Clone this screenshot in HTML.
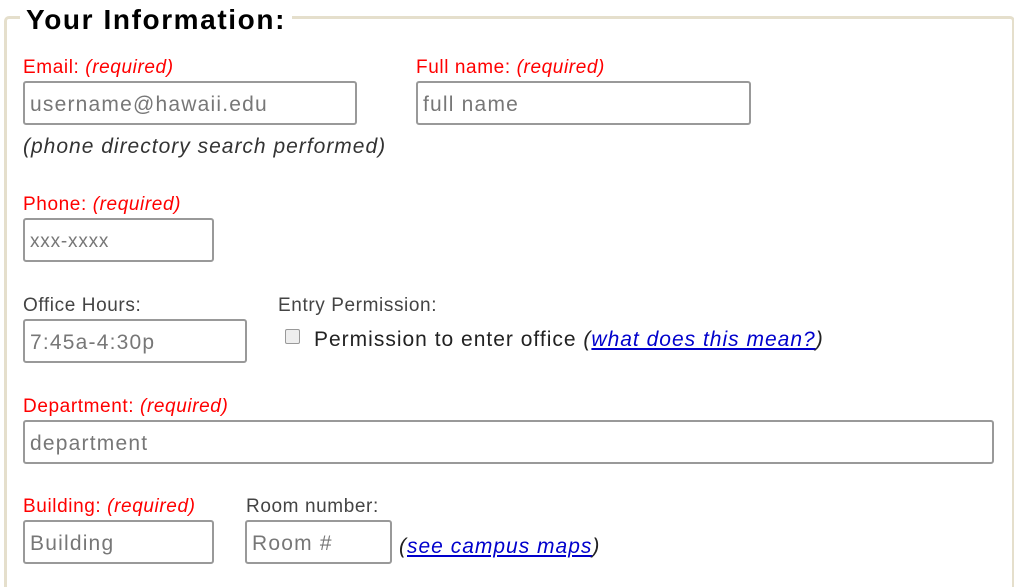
<!DOCTYPE html>
<html style="overflow:hidden;height:587px"><head><style>
body{margin:0;width:1014px;height:587px;background:#fff;font-family:"Liberation Sans",sans-serif;position:relative;overflow:hidden}
.fs{position:absolute;left:4px;top:16px;width:1005px;height:568px;border:3px solid #e5dfcc;border-bottom:none;border-radius:5px 5px 0 0}
.lg{position:absolute;left:20px;top:2px;background:#fff;padding:0 6px;font-weight:bold;font-size:28px;color:#000;line-height:36px;letter-spacing:1.6px}
.l{position:absolute;font-size:19px;line-height:22px;color:#444;white-space:nowrap;letter-spacing:0.6px}
.r{color:#f00}
i{font-style:italic}
.in{position:absolute;box-sizing:border-box;border:2px solid #999;border-radius:3px;height:44px;font-size:21px;color:#777;padding-left:5px;line-height:44px;white-space:nowrap;letter-spacing:1.2px}
.t{position:absolute;font-size:21px;line-height:24px;color:#222;white-space:nowrap;letter-spacing:1px}
a{color:#00c;text-decoration:underline}
.cb{position:absolute;left:285px;top:329px;width:13px;height:13px;border:1px solid #999;border-radius:2px;background:#eee}
</style></head><body>
<div class="fs"></div>
<div class="lg">Your Information:</div>
<div class="l r" style="left:23px;top:57px">Email: <i>(required)</i></div>
<div class="in" style="left:23px;top:81px;width:334px">username@hawaii.edu</div>
<div class="l r" style="left:416px;top:57px">Full name: <i>(required)</i></div>
<div class="in" style="left:416px;top:81px;width:335px">full name</div>
<div class="t" style="left:23px;top:135px;color:#333"><i>(phone directory search performed)</i></div>
<div class="l r" style="left:23px;top:194px">Phone: <i>(required)</i></div>
<div class="in" style="left:23px;top:218px;width:191px;font-size:19px;letter-spacing:0.8px">xxx-xxxx</div>
<div class="l" style="left:23px;top:295px">Office Hours:</div>
<div class="in" style="left:23px;top:319px;width:224px">7:45a-4:30p</div>
<div class="l" style="left:278px;top:295px">Entry Permission:</div>
<div class="cb"></div>
<div class="t" style="left:314px;top:328px">Permission to enter office <i>(<a>what does this mean?</a>)</i></div>
<div class="l r" style="left:23px;top:396px">Department: <i>(required)</i></div>
<div class="in" style="left:23px;top:420px;width:971px">department</div>
<div class="l r" style="left:23px;top:496px">Building: <i>(required)</i></div>
<div class="in" style="left:23px;top:520px;width:191px">Building</div>
<div class="l" style="left:246px;top:496px">Room number:</div>
<div class="in" style="left:245px;top:520px;width:147px">Room #</div>
<div class="t" style="left:399px;top:535px"><i>(<a>see campus maps</a>)</i></div>
</body></html>
